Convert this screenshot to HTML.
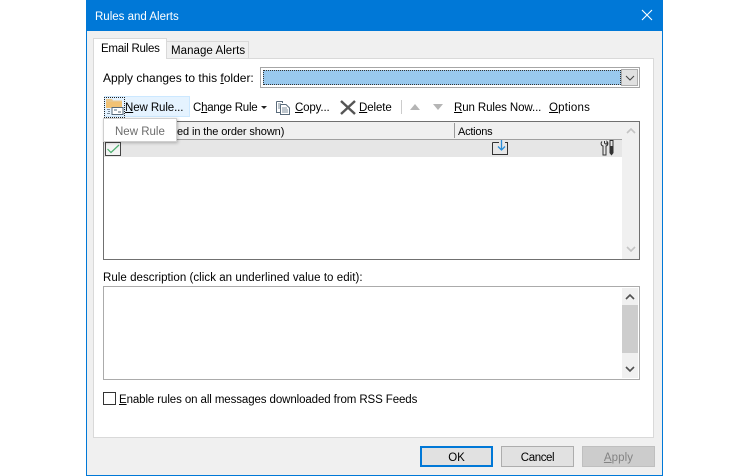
<!DOCTYPE html>
<html><head><meta charset="utf-8">
<style>
html,body{margin:0;padding:0;background:#fff}
body{width:750px;height:476px;position:relative;overflow:hidden;font-family:"Liberation Sans",sans-serif;font-size:11.5px;color:#000}
.a{position:absolute;box-sizing:border-box}
.t{position:absolute;white-space:nowrap;line-height:14px;height:14px}
u{text-decoration:underline;text-underline-offset:1px}
</style></head><body>
<div class="a" style="left:86px;top:0;width:577px;height:476px;background:#f0f0f0;border:1px solid #0078d7;border-top:0"></div>
<div class="a" style="left:86px;top:0;width:577px;height:31px;background:#0078d7"></div>
<div class="t" style="left:95px;top:10px;color:#fff">Rules and Alerts</div>
<svg class="a" style="left:641px;top:9px" width="12" height="12"><path d="M1 1L11 11M11 1L1 11" stroke="#fff" stroke-width="1.1" fill="none"/></svg>

<div class="a" style="left:93px;top:58px;width:561px;height:380px;background:#fff;border:1px solid #d9d9d9"></div>
<div class="a" style="left:93px;top:38px;width:74px;height:21px;background:#fff;border:1px solid #d9d9d9;border-bottom:0"></div>
<div class="a" style="left:167px;top:41px;width:82px;height:18px;background:#f0f0f0;border:1px solid #d9d9d9;border-left:0"></div>
<div class="t" style="left:101px;top:42px;letter-spacing:-.25px">Email Rules</div>
<div class="t" style="left:171px;top:44px;letter-spacing:.05px">Manage Alerts</div>

<div class="t" style="left:103px;top:71px;font-size:12px"><span style="letter-spacing:0">Apply changes to this <u>f</u>older:</span></div>
<div class="a" style="left:260px;top:67px;width:380px;height:21px;background:#fff;border:1px solid #a6a6a6"></div>
<div class="a" style="left:263px;top:70px;width:358px;height:15px;background:#99c9ee;border:1px dotted #333"></div>
<div class="a" style="left:621px;top:69px;width:17px;height:17px;background:#e1e1e1;border:1px solid #adadad"></div>
<svg class="a" style="left:625px;top:75px" width="10" height="6"><path d="M1 1L5 5L9 1" stroke="#444" fill="none"/></svg>

<div class="a" style="left:104px;top:96px;width:86px;height:21px;background:#e5f3ff;border:1px solid #cce8ff"></div>
<svg class="a" style="left:105px;top:98px" width="20" height="20">
<path d="M1 1H7L8 2.500H17V9H1Z" fill="#eac78c"/><rect x="1" y="4" width="16" height="6" fill="#f2c274"/>
<rect x="7" y="9.500" width="11" height="7" fill="#fff" stroke="#56697a"/><path d="M9 12H12M13 14H16" stroke="#56697a"/><path d="M2 11.500H5M3 13.500H5M2 15.500H5" stroke="#7a8a98"/></svg>
<div class="a" style="left:104px;top:97px;width:21px;height:21px;border:1px dotted #222"></div>
<div class="t" style="left:125px;top:101px;letter-spacing:-.1px"><u>N</u>ew Rule...</div>
<div class="t" style="left:193px;top:101px;letter-spacing:-.25px">C<u>h</u>ange Rule</div>
<svg class="a" style="left:261px;top:106px" width="6" height="4"><path d="M0 0H6L3 3Z" fill="#222"/></svg>
<svg class="a" style="left:275px;top:100px" width="17" height="16"><path d="M1.500 1.500H7.500V3M1.500 1.500V12.500H5" stroke="#5a6b7b" fill="none"/><path d="M5.500 4.500H11L14.500 8V14.500H5.500Z" fill="#fff" stroke="#5a6b7b"/><path d="M7 8H12M7 10H13M7 12H13M3 4H6M3 6H5M3 8H5" stroke="#7f8f9e"/></svg>
<div class="t" style="left:295px;top:101px;letter-spacing:-.15px"><u>C</u>opy...</div>
<svg class="a" style="left:340px;top:100px" width="16" height="15"><path d="M1 1L15 14M15 1L1 14" stroke="#555" stroke-width="2.400" fill="none"/></svg>
<div class="t" style="left:359px;top:101px;letter-spacing:-.1px"><u>D</u>elete</div>
<div class="a" style="left:401px;top:100px;width:1px;height:14px;background:#ccc"></div>
<svg class="a" style="left:410px;top:104px" width="10" height="7"><path d="M5 0L10 6H0Z" fill="#b5b5b5"/></svg>
<svg class="a" style="left:433px;top:104px" width="10" height="7"><path d="M0 0H10L5 6Z" fill="#b5b5b5"/></svg>
<div class="t" style="left:454px;top:101px;letter-spacing:-.1px"><u>R</u>un Rules Now...</div>
<div class="t" style="left:549px;top:101px;letter-spacing:.2px"><u>O</u>ptions</div>

<div class="a" style="left:103px;top:121px;width:537px;height:139px;background:#fff;border:1px solid #707070"></div>
<div class="a" style="left:104px;top:122px;width:518px;height:18px;background:#f0f0f0;border-bottom:1px solid #a0a0a0"></div>
<div class="a" style="left:454px;top:123px;width:1px;height:15px;background:#999"></div>
<div class="t" style="left:177px;top:125px;font-size:11px;letter-spacing:-.1px">ed in the order shown)</div>
<div class="t" style="left:458px;top:125px;font-size:11px;letter-spacing:-.25px">Actions</div>
<div class="a" style="left:104px;top:140px;width:518px;height:17px;background:#e6e6e6"></div>
<div class="a" style="left:622px;top:122px;width:17px;height:137px;background:#f0f0f0"></div>
<svg class="a" style="left:626px;top:127px" width="10" height="7"><path d="M1 6L5 2L9 6" stroke="#c4c4c4" stroke-width="1.600" fill="none"/></svg>
<svg class="a" style="left:626px;top:246px" width="10" height="7"><path d="M1 1L5 5L9 1" stroke="#c4c4c4" stroke-width="1.600" fill="none"/></svg>
<div class="a" style="left:105px;top:142px;width:16px;height:14px;background:#f4f4f4;border:1px solid #444"></div>
<svg class="a" style="left:106px;top:143px" width="14" height="12"><path d="M1.500 6L5 9.500L13 2" stroke="#4caf6e" stroke-width="1.200" fill="none"/></svg>
<svg class="a" style="left:491px;top:139px" width="18" height="17"><path d="M1.500 3.500V15.500H16.500V3.500H14M1.500 3.500H8" stroke="#333" fill="none"/><path d="M10.500 1V11M7 7.500L10.500 11L14 7.500" stroke="#2a8dd8" stroke-width="1.300" fill="none"/></svg>
<svg class="a" style="left:600px;top:139px" width="15" height="18"><path d="M2 2.500C.5 4 1 6.500 3 7V16H6V7C8 6.500 8.500 4 7 2.500V5H5.500L4.500 4V2" stroke="#333" fill="none"/><rect x="10" y="1.500" width="3" height="6" fill="none" stroke="#333"/><path d="M9.500 8H13.500V14L11.500 16.500L9.500 14Z" fill="#333"/></svg>

<div class="a" style="left:103px;top:118px;width:74px;height:24px;background:#fff;border:1px solid #cfcfcf;box-shadow:1px 1px 3px rgba(0,0,0,.25)"></div>
<div class="t" style="left:115px;top:125px;color:#6d6d6d">New Rule</div>

<div class="t" style="left:103px;top:271px;letter-spacing:.05px">Rule description (click an underlined value to edit):</div>
<div class="a" style="left:103px;top:286px;width:537px;height:94px;background:#fff;border:1px solid #ababab"></div>
<div class="a" style="left:622px;top:288px;width:16px;height:90px;background:#f0f0f0"></div>
<div class="a" style="left:622px;top:305px;width:16px;height:48px;background:#cdcdcd"></div>
<svg class="a" style="left:625px;top:293px" width="10" height="7"><path d="M1 6L5 2L9 6" stroke="#505050" stroke-width="1.600" fill="none"/></svg>
<svg class="a" style="left:625px;top:366px" width="10" height="7"><path d="M1 1L5 5L9 1" stroke="#505050" stroke-width="1.600" fill="none"/></svg>

<div class="a" style="left:103px;top:392px;width:13px;height:13px;background:#fff;border:1px solid #333"></div>
<div class="t" style="left:119px;top:393px;letter-spacing:-.1px"><u>E</u>nable rules on all messages downloaded from RSS Feeds</div>

<div class="a" style="left:420px;top:446px;width:73px;height:21px;background:#e1e1e1;border:2px solid #0078d7"></div>
<div class="t" style="left:420px;width:73px;top:451px;text-align:center">OK</div>
<div class="a" style="left:501px;top:446px;width:73px;height:21px;background:#e1e1e1;border:1px solid #adadad"></div>
<div class="t" style="left:501px;width:73px;top:451px;text-align:center;letter-spacing:-.4px">Cancel</div>
<div class="a" style="left:582px;top:446px;width:73px;height:21px;background:#ccc;border:1px solid #bfbfbf"></div>
<div class="t" style="left:582px;width:73px;top:451px;text-align:center;color:#838383;letter-spacing:.1px"><u>A</u>pply</div>
</body></html>
